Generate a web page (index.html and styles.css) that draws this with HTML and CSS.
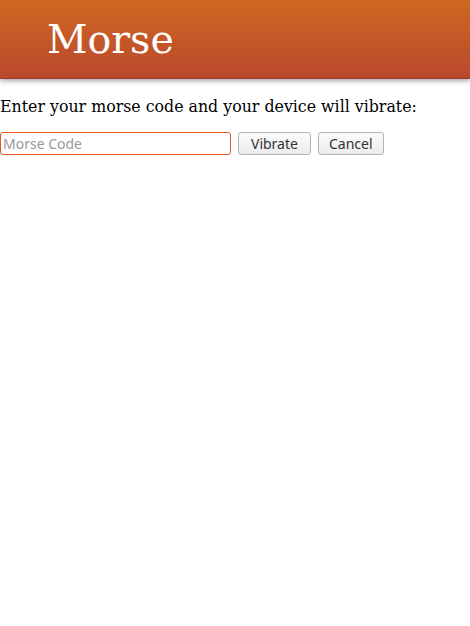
FILE: index.html
```
<!DOCTYPE html>
<html>
<head>
<meta charset="utf-8">
<link rel="stylesheet" href="styles.css">
</head>
<body>
<header class="bar"><h1 class="title">Morse</h1></header>
<main class="content">
<p class="intro">Enter your morse code and your device will vibrate:</p>
<div class="row">
<input class="code" type="text" placeholder="Morse Code">
<button class="btn btn-vibrate">Vibrate</button>
<button class="btn">Cancel</button>
</div>
</main>
</body>
</html>
```
FILE: styles.css
```
html, body { margin: 0; padding: 0; background: #fff; }
body { font-family: "DejaVu Serif", serif; color: #000; }
.bar {
  height: 78px;
  background: linear-gradient(#d0671f, #b9482e);
  border-bottom: 1px solid #9e3a26;
  box-shadow: 0 2px 5px rgba(0,0,0,0.35);
  display: flex;
  align-items: center;
  padding-left: 47px;
}
.title { margin: 0; font-weight: normal; font-size: 39.5px; color: #fff; }
.content { padding-top: 18px; }
.intro { margin: 0 0 16px 0; font-size: 15.8px; line-height: 19px; }
.row { display: flex; gap: 7px; align-items: center; }
.code {
  box-sizing: border-box;
  width: 231px; height: 23px;
  margin: 0;
  border: 1px solid #dd5a25;
  border-radius: 3px;
  padding: 0 2px;
  font-family: "Noto Sans", sans-serif;
  font-size: 14px;
  outline: none;
}
.code::placeholder { color: #999; }
.btn {
  box-sizing: border-box;
  height: 23px;
  margin: 0;
  padding: 0 10px;
  border: 1px solid #b4b4b4;
  border-radius: 3px;
  background: linear-gradient(#fbfbfb, #ececec);
  font-family: "Noto Sans", sans-serif;
  font-size: 14px;
  line-height: 1;
  color: #333;
}
.btn-vibrate { padding: 0 12px; }
```
